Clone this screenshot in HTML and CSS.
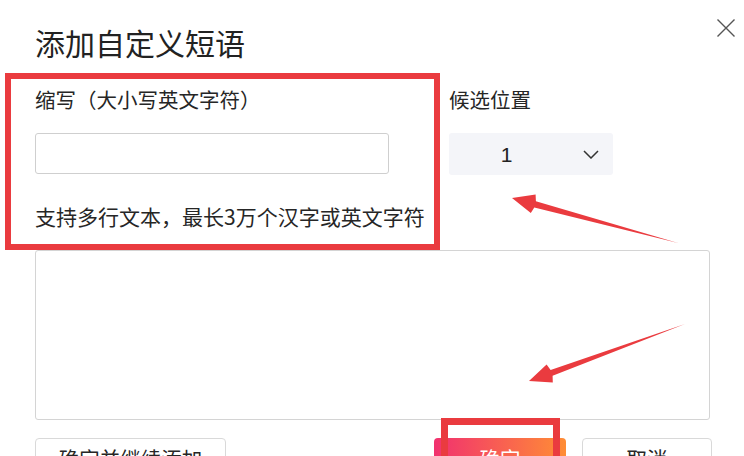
FILE: index.html
```html
<!DOCTYPE html>
<html lang="zh-CN">
<head>
<meta charset="utf-8">
<title>添加自定义短语</title>
<link rel="stylesheet" href="styles.css">
</head>
<body>
<div class="dialog">
  <h1 class="title">添加自定义短语</h1>
  <div class="fields">
    <div class="field field-abbr">
      <label class="label">缩写（大小写英文字符）</label>
      <input class="input" type="text">
    </div>
    <div class="field field-pos">
      <label class="label">候选位置</label>
      <div class="select">
        <span class="select-value">1</span>
        <svg class="chevron" width="16" height="9" viewBox="0 0 16 9"><polyline points="1,1 8,8 15,1" fill="none" stroke="#333" stroke-width="1.5"/></svg>
      </div>
    </div>
  </div>
  <p class="hint">支持多行文本，最长3万个汉字或英文字符</p>
  <textarea class="content"></textarea>
  <div class="actions">
    <button class="btn btn-wide">确定并继续添加</button>
    <div class="actions-right">
      <button class="btn btn-primary">确定</button>
      <button class="btn btn-cancel">取消</button>
    </div>
  </div>
</div>
<button class="close" aria-label="关闭">
  <svg width="20" height="20" viewBox="0 0 20 20"><path d="M1.5 1.5 L18.5 18.5 M18.5 1.5 L1.5 18.5" stroke="#555" stroke-width="1.4" fill="none"/></svg>
</button>
<div class="mark mark-a"></div>
<div class="mark mark-b"></div>
<svg class="arrows" width="744" height="456" viewBox="0 0 744 456">
  <polygon points="512,198 535.6,194.6 535.9,201.2 678,243 534.3,207.4 530.8,213" fill="#ea3b3f"/>
  <polygon points="529,381 546.6,364.5 550.6,370 685,324 552.6,375.8 552.8,382.5" fill="#ea3b3f"/>
</svg>
</body>
</html>
```
FILE: styles.css
```css
html, body {
  margin: 0;
  height: 456px;
  overflow: hidden;
  background: #fff;
}
body {
  font-family: "Noto Sans CJK SC", "Noto Sans", sans-serif;
  color: #262626;
  position: relative;
}
.dialog {
  padding: 27px 0 0 35px;
}
.title {
  margin: 0;
  font-size: 30px;
  line-height: 30px;
  font-weight: 400;
  color: #222;
}
.fields {
  display: flex;
  gap: 60px;
  margin-top: 32px;
}
.field-abbr {
  width: 354px;
}
.label {
  display: block;
  font-size: 20.5px;
  line-height: 20px;
}
.input {
  display: block;
  margin: 24px 0 0;
  width: 354px;
  height: 41px;
  box-sizing: border-box;
  border: 1px solid #cfcfcf;
  border-radius: 3px;
  background: #fff;
  padding: 0 10px;
}
.select {
  margin-top: 24px;
  width: 164px;
  height: 42px;
  background: #f4f5f9;
  border-radius: 3px;
  display: flex;
  align-items: center;
}
.select-value {
  width: 115px;
  text-align: center;
  font-size: 21px;
  line-height: 21px;
  color: #222;
  font-family: "Liberation Sans", "Noto Sans", sans-serif;
}
.chevron {
  margin-left: 19px;
}
.hint {
  margin: 31px 0 0;
  font-size: 21px;
  line-height: 20px;
}
.content {
  display: block;
  margin-top: 24px;
  width: 675px;
  height: 170px;
  box-sizing: border-box;
  border: 1px solid #d4d4d4;
  border-radius: 3px;
  resize: none;
  background: #fff;
}
.actions {
  display: flex;
  justify-content: space-between;
  width: 677px;
  margin-top: 18px;
}
.actions-right {
  display: flex;
  gap: 16px;
}
.btn {
  height: 40px;
  padding: 0;
  font-family: inherit;
  font-size: 20.5px;
  line-height: 20px;
  color: #262626;
  background: #fff;
  border: 1px solid #d9d9d9;
  border-radius: 4px;
}
.btn-wide {
  width: 191px;
}
.btn-primary {
  width: 132px;
  border: none;
  color: #fff;
  background: linear-gradient(90deg, #f1316f, #ff8d35);
}
.btn-cancel {
  width: 130px;
}
.close {
  position: absolute;
  left: 716px;
  top: 18px;
  width: 20px;
  height: 20px;
  padding: 0;
  border: none;
  background: none;
}
.close svg {
  display: block;
}
.mark {
  position: absolute;
  box-sizing: border-box;
  border-style: solid;
  border-color: #ea3b3f;
  pointer-events: none;
}
.mark-a {
  left: 5px;
  top: 73px;
  width: 435px;
  height: 177px;
  border-width: 6px;
}
.mark-b {
  left: 441px;
  top: 418px;
  width: 119px;
  height: 60px;
  border-width: 7px;
}
.arrows {
  position: absolute;
  left: 0;
  top: 0;
  pointer-events: none;
}
```
